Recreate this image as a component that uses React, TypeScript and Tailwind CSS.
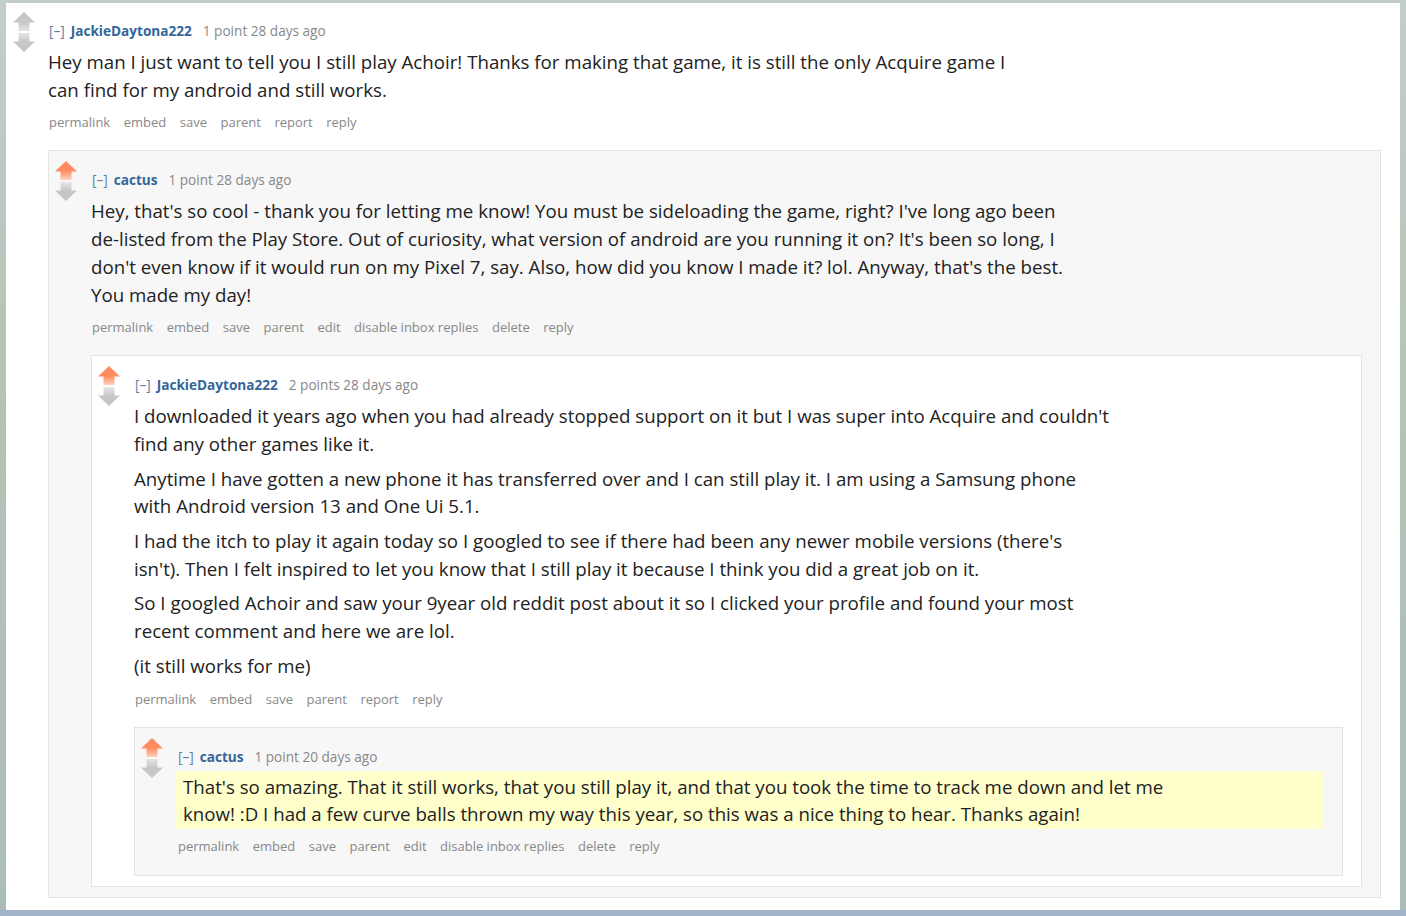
import React from "react";

type Props = {
  author: string;
  score: string;
  time: string;
  paragraphs: string[][];
  buttons: string[];
  upvoted?: boolean;
  highlight?: boolean;
  nested?: boolean;
  children?: React.ReactNode;
};

function Arrow({ dir, color, fade, id }: { dir: "up" | "down"; color: string; fade: string; id: string }) {
  if (dir === "up") {
    return (
      <svg width="22" height="19" viewBox="0 0 22 19" className="block">
        <defs>
          <linearGradient id={id} x1="0" y1="0" x2="0" y2="1">
            <stop offset="0" stopColor={color} />
            <stop offset="1" stopColor={fade} />
          </linearGradient>
        </defs>
        <polygon points="11,0 22,10.5 0,10.5" fill={color} />
        <rect x="5.5" y="10" width="11" height="9" fill={`url(#${id})`} />
      </svg>
    );
  }
  return (
    <svg width="22" height="19" viewBox="0 0 22 19" className="block">
      <defs>
        <linearGradient id={id} x1="0" y1="0" x2="0" y2="1">
          <stop offset="0" stopColor={fade} />
          <stop offset="1" stopColor={color} />
        </linearGradient>
      </defs>
      <rect x="5.5" y="0" width="11" height="9" fill={`url(#${id})`} />
      <polygon points="0,8.5 22,8.5 11,19" fill={color} />
    </svg>
  );
}

function Arrows({ upvoted, id }: { upvoted?: boolean; id: string }) {
  return (
    <div className="flex flex-col gap-[2px] w-[22px] shrink-0">
      {upvoted ? (
        <Arrow dir="up" color="#ff8b60" fade="#ffd2bf" id={`u${id}`} />
      ) : (
        <Arrow dir="up" color="#c6c6c6" fade="#e6e6e6" id={`u${id}`} />
      )}
      <Arrow dir="down" color="#c6c6c6" fade="#e6e6e6" id={`d${id}`} />
    </div>
  );
}

function Comment({ author, score, time, paragraphs, buttons, upvoted, highlight, nested, children }: Props) {
  const id = React.useId().replace(/:/g, "");
  return (
    <div className={nested ? "flex gap-[14px]" : "flex gap-[13px]"}>
      <Arrows upvoted={upvoted} id={id} />
      <div className="flex-1 min-w-0 flex flex-col">
        <div className="mt-[9px] h-[20px] leading-[20px] text-[13.6px] flex items-center pl-px">
          <span className="text-[#5a7ea6]">[–]</span>
          <span className="ml-[6px] font-bold text-[#336699]">{author}</span>
          <span className="ml-[11px] text-[#888888]">
            {score} {time}
          </span>
        </div>
        <div
          className={
            highlight
              ? "mt-[4px] -ml-[1px] bg-[#ffffcc] pl-[7px] pt-[2px] pb-px text-[18.7px] leading-[27.7px] text-[#222222]"
              : "mt-[7px] text-[18.7px] leading-[27.7px] text-[#222222]"
          }
        >
          {paragraphs.map((p, i) => (
            <p key={i} className={i > 0 ? "mt-[7px]" : ""}>
              {p.map((line, j) => (
                <React.Fragment key={j}>
                  {j > 0 && <br />}
                  {line}
                </React.Fragment>
              ))}
            </p>
          ))}
        </div>
        <div
          className={
            highlight
              ? "mt-[8px] mb-[10px] flex gap-[13.5px] h-[18px] leading-[18px] text-[13px] text-[#888888] pl-px"
              : "mt-[10px] mb-[10px] flex gap-[13.5px] h-[18px] leading-[18px] text-[13px] text-[#888888] pl-px"
          }
        >
          {buttons.map((b) => (
            <span key={b}>{b}</span>
          ))}
        </div>
        {children}
      </div>
    </div>
  );
}

function Box({ bg, children }: { bg: string; children: React.ReactNode }) {
  return (
    <div className={`mt-[9px] border border-[#e3e3e3] pt-[10px] pb-[10px] pl-[6px] pr-[18px] ${bg}`}>
      {children}
    </div>
  );
}

const jackieButtons = ["permalink", "embed", "save", "parent", "report", "reply"];
const cactusButtons = ["permalink", "embed", "save", "parent", "edit", "disable inbox replies", "delete", "reply"];

export default function App() {
  return (
    <div
      className="w-[1406px] h-[916px] pt-[3px] pl-[6px] pr-[6px] pb-[6px] bg-[linear-gradient(to_bottom,#c3cec9_0px,#b3c3b6_400px,#abbdba_909px,#a2b5c8_910px)]"
      style={{ fontFamily: '"Open Sans", "Noto Sans", sans-serif' }}
    >
      <div className="h-[907px] bg-white pt-[9px] pl-[7px] pr-[19px] overflow-hidden">
        <Comment
          author="JackieDaytona222"
          score="1 point"
          time="28 days ago"
          buttons={jackieButtons}
          paragraphs={[
            [
              "Hey man I just want to tell you I still play Achoir! Thanks for making that game, it is still the only Acquire game I",
              "can find for my android and still works.",
            ],
          ]}
        >
          <Box bg="bg-[#f7f7f7]">
            <Comment
              author="cactus"
              score="1 point"
              time="28 days ago"
              upvoted
              nested
              buttons={cactusButtons}
              paragraphs={[
                [
                  "Hey, that's so cool - thank you for letting me know! You must be sideloading the game, right? I've long ago been",
                  "de-listed from the Play Store. Out of curiosity, what version of android are you running it on? It's been so long, I",
                  "don't even know if it would run on my Pixel 7, say. Also, how did you know I made it? lol. Anyway, that's the best.",
                  "You made my day!",
                ],
              ]}
            >
              <Box bg="bg-white">
                <Comment
                  author="JackieDaytona222"
                  score="2 points"
                  time="28 days ago"
                  upvoted
                  nested
                  buttons={jackieButtons}
                  paragraphs={[
                    [
                      "I downloaded it years ago when you had already stopped support on it but I was super into Acquire and couldn't",
                      "find any other games like it.",
                    ],
                    [
                      "Anytime I have gotten a new phone it has transferred over and I can still play it. I am using a Samsung phone",
                      "with Android version 13 and One Ui 5.1.",
                    ],
                    [
                      "I had the itch to play it again today so I googled to see if there had been any newer mobile versions (there's",
                      "isn't). Then I felt inspired to let you know that I still play it because I think you did a great job on it.",
                    ],
                    [
                      "So I googled Achoir and saw your 9year old reddit post about it so I clicked your profile and found your most",
                      "recent comment and here we are lol.",
                    ],
                    ["(it still works for me)"],
                  ]}
                >
                  <Box bg="bg-[#f7f7f7]">
                    <Comment
                      author="cactus"
                      score="1 point"
                      time="20 days ago"
                      upvoted
                      nested
                      highlight
                      buttons={cactusButtons}
                      paragraphs={[
                        [
                          "That's so amazing. That it still works, that you still play it, and that you took the time to track me down and let me",
                          "know! :D I had a few curve balls thrown my way this year, so this was a nice thing to hear. Thanks again!",
                        ],
                      ]}
                    />
                  </Box>
                </Comment>
              </Box>
            </Comment>
          </Box>
        </Comment>
      </div>
    </div>
  );
}
